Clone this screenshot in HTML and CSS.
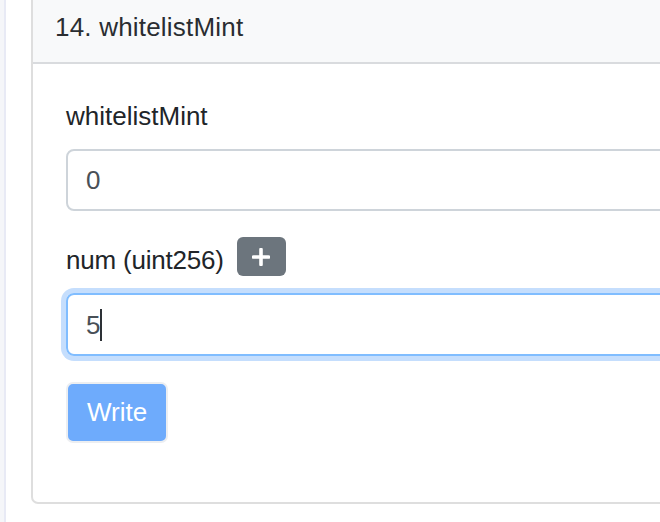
FILE: index.html
```html
<!DOCTYPE html>
<html lang="en">
<head>
<meta charset="utf-8">
<title>whitelistMint</title>
<link rel="stylesheet" href="styles.css">
</head>
<body>
<div class="page">
  <div class="side-strip"></div>
  <main class="main">
    <section class="card">
      <div class="card-header">14. whitelistMint</div>
      <div class="card-body">
        <div class="form-group">
          <label class="form-label">whitelistMint</label>
          <div class="form-control">0</div>
        </div>
        <div class="form-group">
          <div class="label-row">
            <label class="form-label-inline">num (uint256)</label>
            <button class="btn-add" type="button" aria-label="Add">
              <svg width="18" height="18" viewBox="0 0 18 18"><path d="M9 1.5v15M1.5 9h15" stroke="#fff" stroke-width="3.6" stroke-linecap="round" fill="none"/></svg>
            </button>
          </div>
          <div class="form-control focused">5<span class="caret"></span></div>
        </div>
        <button class="btn-write" type="button">Write</button>
      </div>
    </section>
  </main>
</div>
</body>
</html>
```
FILE: styles.css
```css
html, body {
  margin: 0;
  padding: 0;
  overflow: hidden;
  background: #fff;
}
body {
  font-family: "Liberation Sans", Arial, Helvetica, sans-serif;
  font-size: 26px;
  line-height: 39px;
  color: #212529;
  width: 660px;
  height: 522px;
}
.page {
  display: flex;
  height: 522px;
  overflow: hidden;
}
.side-strip {
  width: 4px;
  flex: none;
  background: #f5f6f9;
  border-right: 2px solid #e8eaf5;
}
.main {
  flex: none;
  width: 760px;
  padding-left: 25px;
}
.card {
  margin-top: -10px;
  border: 2px solid #dedede;
  border-radius: 7px;
  background: #fff;
  overflow: hidden;
}
.card-header {
  background: #f8f9fa;
  border-bottom: 2px solid #d9dbde;
  padding: 15.5px 22px;
  color: #2a2d31;
  letter-spacing: 0.2px;
}
.card-body {
  padding: 33px 33px 59px 33px;
}
.form-group + .form-group {
  margin-top: 30px;
}
.form-label {
  display: block;
  margin-bottom: 13px;
}
.label-row {
  display: flex;
  align-items: flex-start;
  gap: 13px;
  margin-bottom: 13px;
  height: 39px;
}
.form-label-inline {
  display: block;
  letter-spacing: -0.2px;
}
.btn-add {
  margin-top: -4px;
  width: 49px;
  height: 39px;
  border: none;
  border-radius: 6px;
  background: #6c757d;
  display: flex;
  align-items: center;
  justify-content: center;
  padding: 0;
}
.btn-add svg {
  display: block;
}
.form-control {
  height: 62px;
  box-sizing: border-box;
  border: 2px solid #ced4da;
  border-radius: 8px;
  padding: 0 18px;
  line-height: 58px;
  color: #495057;
  display: flex;
  align-items: center;
}
.form-control.focused {
  height: 63px;
  border-color: #80bdff;
  box-shadow: 0 0 0 5px #c5defd;
}
.caret {
  display: inline-block;
  width: 2px;
  height: 32px;
  background: #2d3136;
}
.btn-write {
  margin-top: 26px;
  height: 61px;
  box-sizing: border-box;
  padding: 0 19px;
  border: 2px solid #eceef1;
  border-radius: 7px;
  background: #6eabfc;
  color: #fff;
  font-family: "Liberation Sans", Arial, Helvetica, sans-serif;
  font-size: 26px;
  line-height: 57px;
  display: block;
}
```
